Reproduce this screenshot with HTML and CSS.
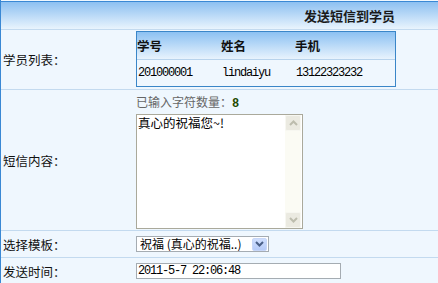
FILE: index.html
```html
<!DOCTYPE html>
<html lang="zh-CN">
<head>
    <meta charset="UTF-8">
    <title>发送短信到学员</title>
    <link rel="stylesheet" href="styles.css">
</head>
<body>
    <div class="panel">
        <div class="panel-head">发送短信到学员</div>

        <div class="row row-students">
            <div class="label">学员列表：</div>
            <div class="field">
                <table class="students">
                    <tr>
                        <th class="col-no">学号</th>
                        <th class="col-name">姓名</th>
                        <th>手机</th>
                    </tr>
                    <tr>
                        <td class="mono">201000001</td>
                        <td class="mono">lindaiyu</td>
                        <td class="mono">13122323232</td>
                    </tr>
                </table>
            </div>
        </div>

        <div class="row row-content">
            <div class="label">短信内容：</div>
            <div class="field">
                <div class="counter">已输入字符数量：<b class="count">8</b></div>
                <div class="memo">
                    <textarea class="memo-text">真心的祝福您~!</textarea>
                    <div class="scrollbar">
                        <span class="scroll-btn">
                            <svg width="9" height="6" viewBox="0 0 9 6"><path d="M1 5 L4.5 1.5 L8 5" fill="none" stroke="#bdbdae" stroke-width="2"/></svg>
                        </span>
                        <span class="scroll-btn">
                            <svg width="9" height="6" viewBox="0 0 9 6"><path d="M1 1 L4.5 4.5 L8 1" fill="none" stroke="#bdbdae" stroke-width="2"/></svg>
                        </span>
                    </div>
                </div>
            </div>
        </div>

        <div class="row row-small">
            <div class="label">选择模板：</div>
            <div class="field">
                <span class="select">
                    <select class="select-input">
                        <option>祝福 (真心的祝福..)</option>
                    </select>
                    <span class="select-btn">
                        <svg width="9" height="6" viewBox="0 0 9 6"><path d="M1 1 L4.5 4.5 L8 1" fill="none" stroke="#4a5f86" stroke-width="2"/></svg>
                    </span>
                </span>
            </div>
        </div>

        <div class="row row-small">
            <div class="label">发送时间：</div>
            <div class="field">
                <input class="time-input" type="text" value="2011-5-7 22:06:48">
            </div>
        </div>
    </div>
</body>
</html>
```

FILE: styles.css
```css
* {
    box-sizing: border-box;
}

body {
    margin: 0;
    background: #eef6fd;
    font-family: "Noto Sans CJK SC", sans-serif;
    font-size: 12px;
    color: #000;
}

.panel {
    border-left: 1px solid #3a88d4;
    padding-top: 1px;
    background: #eff7fe;
}

.panel-head {
    height: 29px;
    border-top: 1px solid #3a88d4;
    border-bottom: 1px solid #c3daef;
    background: linear-gradient(#8dc0f1, #e9f4fd);
    text-align: right;
    padding-right: 43px;
    line-height: 27px;
    font-size: 13px;
    font-weight: bold;
    color: #1a1a1a;
}

.row {
    display: flex;
    border-bottom: 1px solid #c3daef;
}

.label {
    width: 135px;
    padding-left: 2px;
    display: flex;
    align-items: center;
    font-size: 12.5px;
    color: #111;
}

.field {
    flex: 1;
}

/* student list */
.row-students {
    height: 60px;
}

.row-students .field {
    padding-top: 1px;
}

.students {
    width: 260px;
    border: 1px solid #3a86c8;
    border-spacing: 0;
}

.students th {
    height: 28px;
    padding: 0;
    text-align: left;
    font-weight: bold;
    font-size: 12.5px;
    color: #111;
    background: linear-gradient(#8cc1f2, #e8f3fd);
    border-bottom: 1px solid #b8d3ec;
}

.students td {
    height: 26px;
    padding: 0 0 0 1px;
}

.students .col-no {
    width: 84px;
}

.students .col-name {
    width: 74px;
}

.mono {
    font-family: "Liberation Mono", monospace;
    font-size: 12px;
    letter-spacing: -1.2px;
}

/* message */
.row-content {
    height: 141px;
}

.counter {
    height: 24px;
    line-height: 24px;
    color: #666;
}

.count {
    font-family: "Liberation Mono", monospace;
    color: #1f4a00;
}

.memo {
    display: flex;
    width: 167px;
    height: 115px;
    border: 1px solid #aaa99b;
    background: #fff;
}

.memo-text {
    flex: 1;
    border: none;
    resize: none;
    outline: none;
    padding: 1px 0 0 1px;
    font-family: "Noto Sans CJK SC", sans-serif;
    font-size: 12.5px;
    line-height: 14px;
    color: #000;
    overflow: hidden;
}

.scrollbar {
    width: 16px;
    margin-right: 1px;
    display: flex;
    flex-direction: column;
    justify-content: space-between;
    background: #fbfbf4;
}

.scroll-btn {
    height: 16px;
    display: flex;
    align-items: center;
    justify-content: center;
    background: #ebeae1;
    border: 1px solid #f7f7f1;
    border-radius: 2px;
}

/* select + time */
.row-small {
    height: 27px;
}

.row-small .field {
    display: flex;
    align-items: center;
}

.select {
    display: inline-flex;
    align-items: center;
    width: 133px;
    height: 16px;
    border: 1px solid #a5acb2;
    background: #fff;
}

.select-input {
    flex: 1;
    appearance: none;
    border: none;
    background: transparent;
    padding: 0 0 0 3px;
    font-family: "Noto Sans CJK SC", sans-serif;
    font-size: 12px;
    color: #000;
    height: 14px;
    line-height: 14px;
}

.select-btn {
    width: 15px;
    height: 13px;
    margin-right: 1px;
    display: flex;
    align-items: center;
    justify-content: center;
    background: linear-gradient(#cfdefd, #b6cbf8);
    border: 1px solid #c7d7f8;
    border-radius: 2px;
}

.time-input {
    width: 205px;
    height: 16px;
    border: 1px solid #a5acb2;
    padding: 0 1px;
    font-family: "Liberation Mono", monospace;
    font-size: 12px;
    letter-spacing: -1.2px;
    color: #000;
    background: #fff;
}
```
